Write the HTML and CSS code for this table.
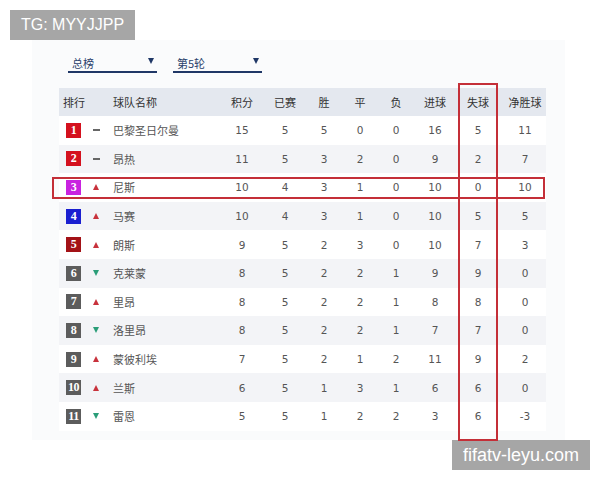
FILE: index.html
```html
<!DOCTYPE html>
<html lang="zh">
<head>
<meta charset="utf-8">
<link rel="stylesheet" href="styles.css">
</head>
<body>
<div class="wm wm-top">TG: MYYJJPP</div>
<div class="card">
  <div class="filters">
    <div class="select"><span>总榜</span><span class="caret"></span></div>
    <div class="select"><span>第5轮</span><span class="caret"></span></div>
  </div>
  <div class="table">
    <div class="col-hl"></div>
    <div class="row head">
      <div class="c rank">排行</div><div class="c"></div><div class="c name">球队名称</div>
      <div class="c">积分</div><div class="c">已赛</div><div class="c">胜</div><div class="c">平</div><div class="c">负</div><div class="c">进球</div><div class="c">失球</div><div class="c gd">净胜球</div>
    </div>
    <div class="row">
      <div class="c"><span class="badge b-red">1</span></div><div class="c"><span class="same"></span></div><div class="c name">巴黎圣日尔曼</div>
      <div class="c n">15</div><div class="c n">5</div><div class="c n">5</div><div class="c n">0</div><div class="c n">0</div><div class="c n">16</div><div class="c n">5</div><div class="c n gd">11</div>
    </div>
    <div class="row alt">
      <div class="c"><span class="badge b-red">2</span></div><div class="c"><span class="same"></span></div><div class="c name">昂热</div>
      <div class="c n">11</div><div class="c n">5</div><div class="c n">3</div><div class="c n">2</div><div class="c n">0</div><div class="c n">9</div><div class="c n">2</div><div class="c n gd">7</div>
    </div>
    <div class="row hl">
      <div class="row-hl"></div>
      <div class="c"><span class="badge b-mag">3</span></div><div class="c"><span class="up"></span></div><div class="c name">尼斯</div>
      <div class="c n">10</div><div class="c n">4</div><div class="c n">3</div><div class="c n">1</div><div class="c n">0</div><div class="c n">10</div><div class="c n">0</div><div class="c n gd">10</div>
    </div>
    <div class="row alt">
      <div class="c"><span class="badge b-blue">4</span></div><div class="c"><span class="up"></span></div><div class="c name">马赛</div>
      <div class="c n">10</div><div class="c n">4</div><div class="c n">3</div><div class="c n">1</div><div class="c n">0</div><div class="c n">10</div><div class="c n">5</div><div class="c n gd">5</div>
    </div>
    <div class="row">
      <div class="c"><span class="badge b-dark">5</span></div><div class="c"><span class="up"></span></div><div class="c name">朗斯</div>
      <div class="c n">9</div><div class="c n">5</div><div class="c n">2</div><div class="c n">3</div><div class="c n">0</div><div class="c n">10</div><div class="c n">7</div><div class="c n gd">3</div>
    </div>
    <div class="row alt">
      <div class="c"><span class="badge b-gray">6</span></div><div class="c"><span class="down"></span></div><div class="c name">克莱蒙</div>
      <div class="c n">8</div><div class="c n">5</div><div class="c n">2</div><div class="c n">2</div><div class="c n">1</div><div class="c n">9</div><div class="c n">9</div><div class="c n gd">0</div>
    </div>
    <div class="row">
      <div class="c"><span class="badge b-gray">7</span></div><div class="c"><span class="up"></span></div><div class="c name">里昂</div>
      <div class="c n">8</div><div class="c n">5</div><div class="c n">2</div><div class="c n">2</div><div class="c n">1</div><div class="c n">8</div><div class="c n">8</div><div class="c n gd">0</div>
    </div>
    <div class="row alt">
      <div class="c"><span class="badge b-gray">8</span></div><div class="c"><span class="down"></span></div><div class="c name">洛里昂</div>
      <div class="c n">8</div><div class="c n">5</div><div class="c n">2</div><div class="c n">2</div><div class="c n">1</div><div class="c n">7</div><div class="c n">7</div><div class="c n gd">0</div>
    </div>
    <div class="row">
      <div class="c"><span class="badge b-gray">9</span></div><div class="c"><span class="up"></span></div><div class="c name">蒙彼利埃</div>
      <div class="c n">7</div><div class="c n">5</div><div class="c n">2</div><div class="c n">1</div><div class="c n">2</div><div class="c n">11</div><div class="c n">9</div><div class="c n gd">2</div>
    </div>
    <div class="row alt">
      <div class="c"><span class="badge b-gray">10</span></div><div class="c"><span class="up"></span></div><div class="c name">兰斯</div>
      <div class="c n">6</div><div class="c n">5</div><div class="c n">1</div><div class="c n">3</div><div class="c n">1</div><div class="c n">6</div><div class="c n">6</div><div class="c n gd">0</div>
    </div>
    <div class="row">
      <div class="c"><span class="badge b-gray">11</span></div><div class="c"><span class="down"></span></div><div class="c name">雷恩</div>
      <div class="c n">5</div><div class="c n">5</div><div class="c n">1</div><div class="c n">2</div><div class="c n">2</div><div class="c n">3</div><div class="c n">6</div><div class="c n gd">-3</div>
    </div>
  </div>
</div>
<div class="wm wm-bottom">fifatv-leyu.com</div>
</body>
</html>
```
FILE: styles.css
```css
html, body {
  margin: 0;
  padding: 0;
  background: #ffffff;
  width: 600px;
  height: 480px;
  overflow: hidden;
  font-family: "Noto Sans CJK SC", "Noto Sans", sans-serif;
}

.wm {
  position: absolute;
  background: #a6a6a6;
  color: #ffffff;
  font-family: "Liberation Sans", Arial, sans-serif;
  display: flex;
  align-items: center;
  justify-content: center;
  height: 30px;
}
.wm-top {
  left: 10px;
  top: 10px;
  width: 125px;
  font-size: 16px;
}
.wm-bottom {
  left: 452px;
  top: 440px;
  width: 138px;
  font-size: 18px;
}

.card {
  margin: 40px 0 0 32px;
  width: 533px;
  height: 400px;
  background: #fafbfc;
  box-sizing: border-box;
  padding: 15px 0 0 27px;
}

.filters {
  display: flex;
  gap: 16px;
  margin-left: 9px;
}
.select {
  width: 82px;
  height: 16px;
  border-bottom: 2px solid #1f3766;
  display: flex;
  justify-content: space-between;
  align-items: center;
  padding: 0 3px 0 4px;
  font-size: 11px;
  color: #2a3f6b;
}
.caret {
  width: 0;
  height: 0;
  border-left: 3.5px solid transparent;
  border-right: 3.5px solid transparent;
  border-top: 6px solid #1f3766;
  margin-top: -4px;
}

.table {
  position: relative;
  width: 487px;
  margin-top: 15px;
}
.col-hl {
  position: absolute;
  left: 399px;
  top: -5px;
  width: 40px;
  bottom: -10px;
  border: 2px solid #c42f38;
  box-sizing: border-box;
  z-index: 2;
  pointer-events: none;
}

.row {
  position: relative;
  display: grid;
  grid-template-columns: 28px 18px 117px 40px 46px 32px 40px 32px 46px 40px 48px;
  height: 28.6px;
  align-items: center;
  font-size: 11px;
  color: #555;
  background: #ffffff;
}
.row.alt { background: #f3f4f7; }
.row-hl {
  position: absolute;
  left: -7px;
  right: 1px;
  top: 4px;
  bottom: 2.5px;
  border: 2px solid #c42f38;
  box-sizing: border-box;
  pointer-events: none;
}
.row.head {
  height: 28px;
  background: #e4e8ef;
  color: #333;
  font-size: 11px;
}
.c {
  text-align: center;
  white-space: nowrap;
  display: flex;
  justify-content: center;
  align-items: center;
}
.c.rank { justify-content: flex-start; padding-left: 4px; }
.c.name { justify-content: flex-start; padding-left: 8px; }
.c.gd { padding-left: 6px; }
.c.n {
  font-family: "DejaVu Sans", sans-serif;
  font-size: 10.5px;
  color: #555;
}

.badge {
  width: 15px;
  height: 15px;
  display: flex;
  align-items: center;
  justify-content: center;
  color: #fff;
  font-family: "Liberation Serif", serif;
  font-weight: bold;
  font-size: 12px;
  margin-left: 1px;
  letter-spacing: -0.5px;
}
.b-red { background: #d4111e; }
.b-mag { background: #c922e0; }
.b-blue { background: #1a1fd0; }
.b-dark { background: #a31217; }
.b-gray { background: #5c5c5c; }

.same {
  width: 7px;
  height: 2px;
  background: #666;
}
.up {
  width: 0;
  height: 0;
  border-left: 3.5px solid transparent;
  border-right: 3.5px solid transparent;
  border-bottom: 6px solid #c8323c;
}
.down {
  width: 0;
  height: 0;
  border-left: 3.5px solid transparent;
  border-right: 3.5px solid transparent;
  border-top: 6px solid #2a9d78;
}
```
